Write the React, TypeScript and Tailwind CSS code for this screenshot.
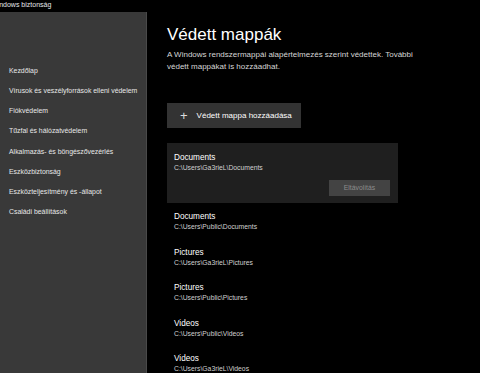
import React from "react";

const navItems = [
  "Kezdőlap",
  "Vírusok és veszélyforrások elleni védelem",
  "Fiókvédelem",
  "Tűzfal és hálózatvédelem",
  "Alkalmazás- és böngészővezérlés",
  "Eszközbiztonság",
  "Eszközteljesítmény és -állapot",
  "Családi beállítások",
];

const folders = [
  { name: "Documents", path: "C:\\Users\\Public\\Documents" },
  { name: "Pictures", path: "C:\\Users\\Ga3rieL\\Pictures" },
  { name: "Pictures", path: "C:\\Users\\Public\\Pictures" },
  { name: "Videos", path: "C:\\Users\\Public\\Videos" },
  { name: "Videos", path: "C:\\Users\\Ga3rieL\\Videos" },
];

const App = () => {
  return (
    <div
      className="w-[480px] h-[373px] overflow-hidden bg-black text-white flex flex-col"
      style={{ fontFamily: '"Liberation Sans", Arial, sans-serif' }}
    >
      {/* title bar */}
      <div className="h-[12px] shrink-0 relative overflow-hidden">
        <span className="absolute left-[-9px] top-[0px] text-[7px] leading-[10px] text-gray-200 whitespace-nowrap">
          Windows biztonság
        </span>
      </div>

      <div className="flex flex-1 min-h-0">
        {/* sidebar */}
        <aside className="w-[147px] shrink-0 bg-[#393939] border-r border-[#4a4a4a] pt-[49px] pl-[9px]">
          <ul className="flex flex-col">
            {navItems.map((item) => (
              <li
                key={item}
                className="h-[20.2px] flex items-center text-[6.9px] text-[#e8e8e8] whitespace-nowrap"
              >
                {item}
              </li>
            ))}
          </ul>
        </aside>

        {/* main */}
        <main className="flex-1 pl-[20px] pt-[12px]">
          <h1 className="text-[17px] leading-[22px] font-normal text-white">Védett mappák</h1>
          <p className="mt-[3px] w-[250px] text-[8px] leading-[12px] text-[#d6d6d6]">
            A Windows rendszermappái alapértelmezés szerint védettek. További védett mappákat is
            hozzáadhat.
          </p>

          <button className="mt-[30px] w-[134px] h-[25px] bg-[#333333] flex items-center pl-[13px] text-[8px] text-white whitespace-nowrap">
            <span className="text-[13px] leading-none font-light mr-[9px] text-[#dcdcdc]">+</span>
            Védett mappa hozzáadása
          </button>

          <div className="mt-[15px] w-[231px] h-[60px] bg-[#1f1f1f] pl-[7px] pt-[9px] flex flex-col">
            <div className="text-[8.2px] leading-[11px] text-white">Documents</div>
            <div className="text-[6.8px] leading-[10px] text-[#d0d0d0]">C:\Users\Ga3rieL\Documents</div>
            <div className="flex justify-end pr-[8px] mt-[7px]">
              <button className="w-[61px] h-[16px] bg-[#434343] text-[6.8px] text-[#8c8c8c]">
                Eltávolítás
              </button>
            </div>
          </div>

          <ul className="mt-[8px] pl-[7px] flex flex-col">
            {folders.map((f, i) => (
              <li key={i} className="h-[35.5px]">
                <div className="text-[8.2px] leading-[11px] text-white">{f.name}</div>
                <div className="text-[6.8px] leading-[10px] text-[#d0d0d0]">{f.path}</div>
              </li>
            ))}
          </ul>
        </main>
      </div>
    </div>
  );
};

export default App;
